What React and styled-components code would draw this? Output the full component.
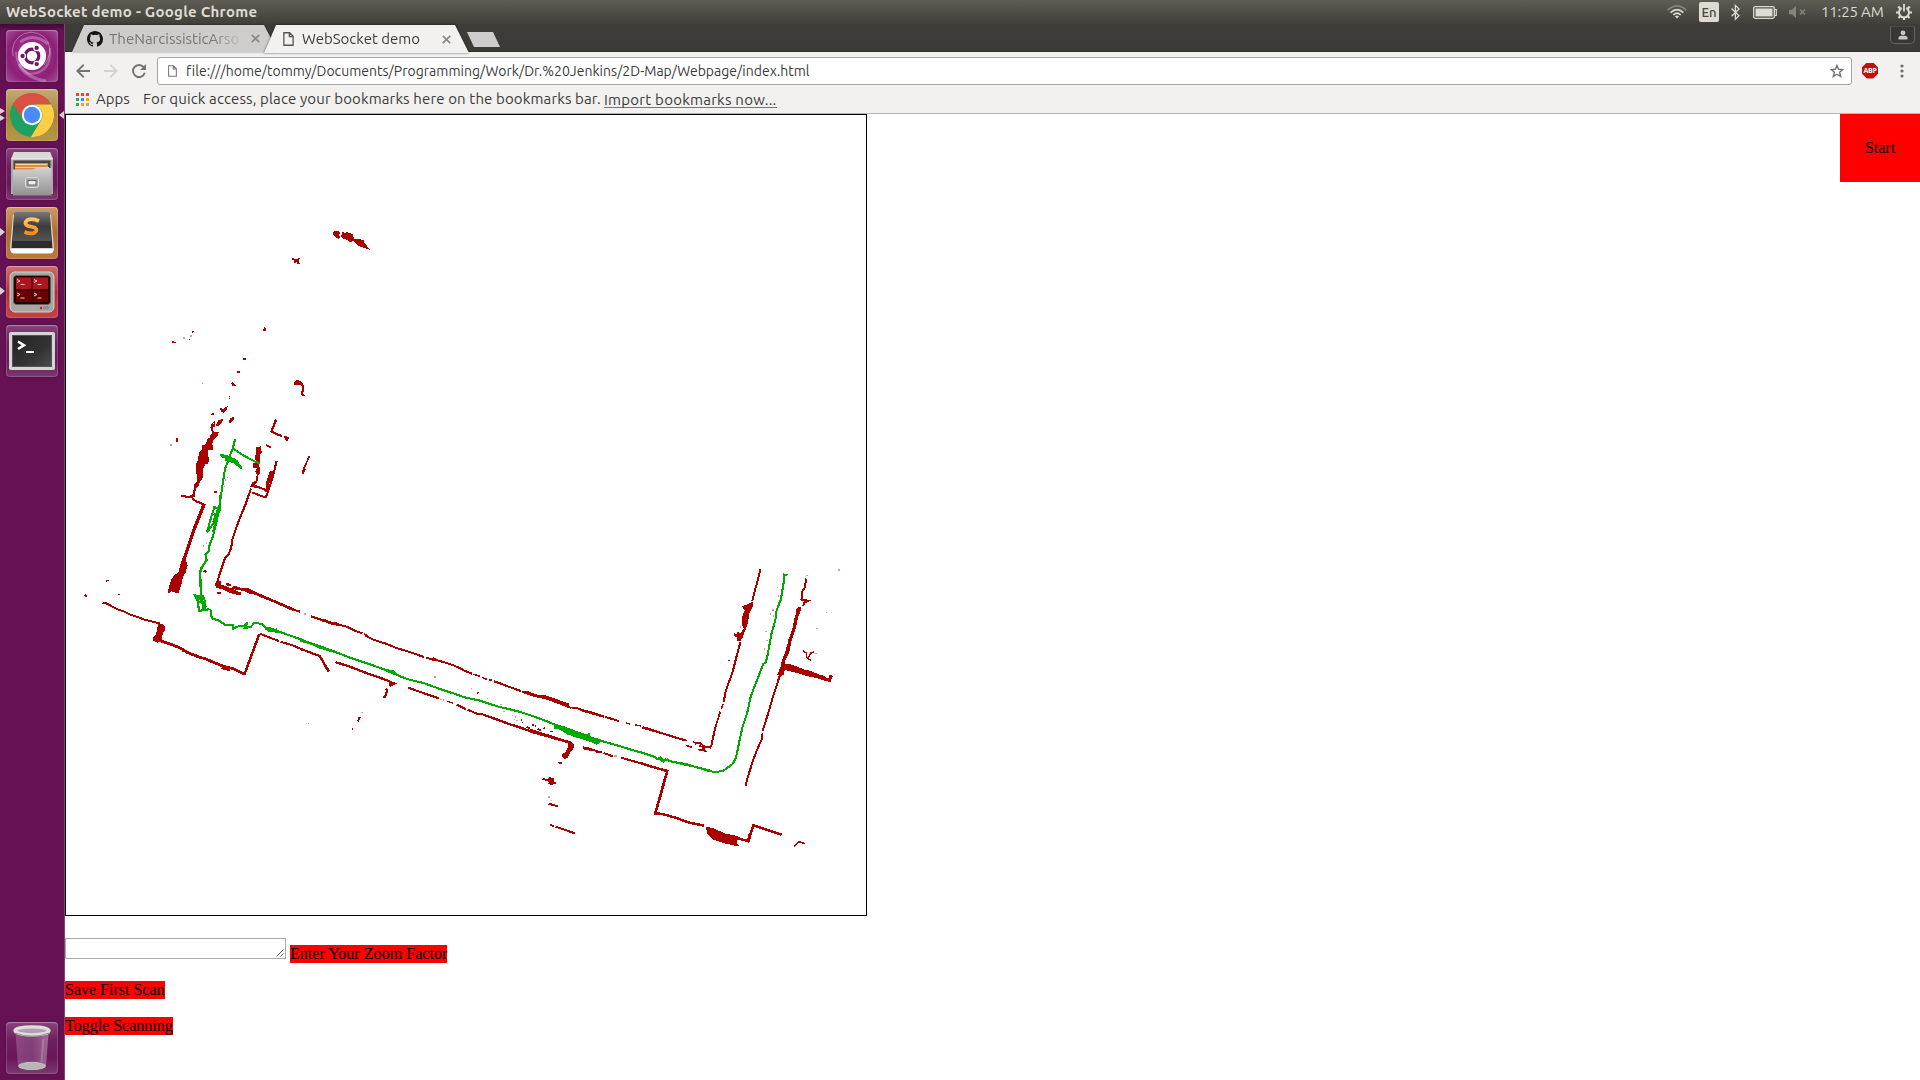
import React from "react";
import styled, { createGlobalStyle } from "styled-components";

const GlobalStyle = createGlobalStyle`
  * { box-sizing: border-box; }
  html, body { margin: 0; padding: 0; background: #fff; overflow: hidden; }
`;

const uiFont = `"Ubuntu", "Noto Sans", "Open Sans", sans-serif`;

const Desktop = styled.div`
  display: flex;
  flex-direction: column;
  width: 1920px;
  height: 1080px;
  overflow: hidden;
  font-family: ${uiFont};
`;

const Panel = styled.header`
  display: flex;
  align-items: center;
  justify-content: space-between;
  height: 24px;
  flex: none;
  padding: 0 8px 0 6px;
  background: linear-gradient(#5f5d53 0, #55534a 30%, #403f3a 100%);
  color: #dfdbd2;
`;

const Label = styled.span`
  font-size: ${(p) => p.$size || 15}px;
  font-weight: ${(p) => p.$weight || 400};
  letter-spacing: ${(p) => p.$track || 0}px;
  line-height: 20px;
  white-space: pre;
`;

const Indicators = styled.div`
  display: flex;
  align-items: center;
  height: 24px;
`;

const Slot = styled.span`
  display: flex;
  align-items: center;
  width: ${(p) => p.$w}px;
  margin-right: ${(p) => p.$gap || 0}px;
  overflow: visible;
`;

const LangBadge = styled.span`
  width: 20px;
  height: 20px;
  margin-right: 12px;
  border-radius: 2px;
  background: #dfdbd2;
  color: #45443e;
  font-size: 13px;
  line-height: 20px;
  font-weight: 500;
  text-align: center;
`;

const Workspace = styled.div`
  display: flex;
  flex: 1;
  min-height: 0;
`;

const Launcher = styled.nav`
  display: flex;
  flex-direction: column;
  gap: 7px;
  width: 65px;
  flex: none;
  padding: 6px 6px 6px 6px;
  border-right: 1px solid #7f4376;
  background: linear-gradient(#3d0c34 0, #651154 7px, #651154 100%);
`;

const Tile = styled.div`
  position: relative;
  display: flex;
  align-items: center;
  justify-content: center;
  width: 52px;
  height: 52px;
  margin-top: ${(p) => (p.$last ? "auto" : "0")};
  border-radius: 4px;
  background: ${(p) => p.$bg};
  box-shadow: inset 0 0 0 1px rgba(255, 255, 255, 0.15), inset 0 1px 1px rgba(255, 255, 255, 0.25), 0 0 2px rgba(0, 0, 0, 0.35);
`;

const Pip = styled.i`
  position: absolute;
  top: ${(p) => p.$top}px;
  left: ${(p) => (p.$right ? "53px" : "-6px")};
  width: 5px;
  height: ${(p) => p.$h || 8}px;
  background: #d9d2d8;
  clip-path: ${(p) => (p.$right ? "polygon(100% 0, 100% 100%, 0 50%)" : "polygon(0 0, 100% 50%, 0 100%)")};
`;

const Browser = styled.main`
  display: flex;
  flex-direction: column;
  flex: 1;
  min-width: 0;
`;

const TabStrip = styled.div`
  display: flex;
  align-items: flex-start;
  justify-content: space-between;
  height: 29px;
  flex: none;
  padding: 1px 5px 0 7px;
  background: linear-gradient(#3d3c37 0, #3c3b37 27px, #252420 28px, #f2f1f0 28px);
`;

const Tabs = styled.div`
  display: flex;
  align-items: flex-start;
`;

const TabEdge = styled.div`
  position: relative;
  margin-left: ${(p) => (p.$active ? "-14px" : "0")};
  filter: drop-shadow(0 0 1px ${(p) => (p.$active ? "rgba(0,0,0,.6)" : "rgba(0,0,0,.4)")});
`;

const Tab = styled.div`
  display: flex;
  align-items: center;
  width: ${(p) => (p.$active ? 205 : 206)}px;
  height: ${(p) => (p.$active ? 28 : 27)}px;
  padding: 0 18px 0 ${(p) => (p.$active ? 19 : 15)}px;
  background: ${(p) => (p.$active ? "#f2f1f0" : "#cfcdcb")};
  color: ${(p) => (p.$active ? "#3b3b3b" : "#777573")};
  clip-path: polygon(12px 0, calc(100% - 14px) 0, 100% 100%, 0 100%);
`;

const TabTitle = styled(Label)`
  flex: 1;
  min-width: 0;
  margin-left: ${(p) => p.$left}px;
  mask-image: ${(p) => (p.$fade ? "linear-gradient(90deg, #000 104px, transparent 134px)" : "none")};
`;

const NewTab = styled.div`
  width: 33px;
  height: 15px;
  margin: 7px 0 0 -2px;
  background: #cfcdcb;
  clip-path: polygon(0 0, 26px 0, 33px 100%, 7px 100%);
`;

const UserButton = styled.div`
  display: flex;
  align-items: center;
  justify-content: center;
  width: 25px;
  height: 18px;
  margin-top: 1px;
  border: 1px solid #66645e;
  border-top-color: #4a4944;
  border-radius: 1px 1px 5px 5px;
  background: #383733;
`;

const Toolbar = styled.div`
  display: flex;
  align-items: center;
  height: 33px;
  flex: none;
  padding: 3px 14px 1px 11px;
  background: #f2f1f0;
`;

const AddressBar = styled.div`
  display: flex;
  align-items: center;
  flex: 1;
  height: 28px;
  margin-right: 10px;
  padding: 0 7px 0 10px;
  border: 1px solid #a6a5a4;
  border-radius: 3px;
  background: #fff;
  color: #3b3b3b;
`;

const Address = styled(Label)`
  flex: 1;
  margin-left: 9px;
`;

const Blocker = styled.span`
  width: 16px;
  height: 16px;
  margin-right: 22px;
  background: #c70d0d;
  color: #fff;
  font: bold 7px/16px "Open Sans", sans-serif;
  text-align: center;
  letter-spacing: -0.3px;
  clip-path: polygon(30% 0, 70% 0, 100% 30%, 100% 70%, 70% 100%, 30% 100%, 0 70%, 0 30%);
`;

const Bookmarks = styled.div`
  display: flex;
  align-items: center;
  height: 28px;
  flex: none;
  padding: 0 11px 1px;
  border-bottom: 1px solid #b4b4b4;
  background: #f2f1f0;
  color: #3b3b3b;
`;

const AppsGrid = styled.span`
  display: grid;
  grid-template-columns: repeat(3, 3px);
  grid-auto-rows: 3px;
  gap: 2px;
  margin-right: 7px;
`;

const AppDot = styled.i`
  background: ${(p) => p.$c};
`;

const ImportLink = styled(Label)`
  height: 17px;
  line-height: 17px;
  border-bottom: 1px solid #777;
`;

const Page = styled.section`
  display: flex;
  align-items: flex-start;
  justify-content: space-between;
  flex: 1;
  background: #fff;
  color: #000;
  font: 16px/18px "Liberation Serif", "Times New Roman", serif;
`;

const Content = styled.div`
  display: flex;
  flex-direction: column;
  align-items: flex-start;
`;

const MapFrame = styled.div`
  width: 802px;
  height: 802px;
  margin-bottom: 22px;
  border: 1px solid #000;
`;

const ZoomRow = styled.div`
  display: flex;
  align-items: flex-end;
  height: 25px;
  margin-bottom: 18px;
`;

const ZoomInput = styled.div`
  display: flex;
  align-items: flex-end;
  justify-content: flex-end;
  align-self: flex-start;
  width: 221px;
  height: 21px;
  margin-right: 4px;
  padding: 1px;
  border: 1px solid #a9a9a9;
`;

const Action = styled.span`
  height: 18px;
  margin-bottom: ${(p) => p.$below || 0}px;
  background: #f00;
  letter-spacing: ${(p) => p.$track || 0}px;
  white-space: pre;
`;

const StartButton = styled.div`
  width: 80px;
  height: 68px;
  background: #f00;
  line-height: 68px;
  text-align: center;
`;

/* ---------- icons ---------- */

const Doc = ({ w, h, color }) => (
  <svg width={w} height={h} viewBox="0 0 10 13" fill="none" stroke={color} strokeWidth="1.2">
    <path d="M.7.7H6L9.3 4V12.3H.7Z M5.8.7V4.2H9.3" />
  </svg>
);

const Close = () => (
  <svg width="9" height="9" viewBox="0 0 9 9" stroke="#8b8987" strokeWidth="1.7">
    <path d="M.8.8 8.2 8.2M8.2.8.8 8.2" />
  </svg>
);

const GitHub = () => (
  <svg width="16" height="16" viewBox="0 0 16 16" fill="#161514">
    <path d="M8 0C3.58 0 0 3.58 0 8c0 3.54 2.29 6.53 5.47 7.59.4.07.55-.17.55-.38v-1.49c-2.01.37-2.53-.49-2.69-.94-.09-.23-.48-.94-.82-1.13-.28-.15-.68-.52-.01-.53.63-.01 1.08.58 1.23.82.72 1.21 1.87.87 2.33.66.07-.52.28-.87.51-1.07-1.78-.2-3.64-.89-3.64-3.95 0-.87.31-1.59.82-2.15-.08-.2-.36-1.02.08-2.12 0 0 .67-.21 2.2.82a7.6 7.6 0 0 1 4 0c1.53-1.04 2.2-.82 2.2-.82.44 1.1.16 1.92.08 2.12.51.56.82 1.27.82 2.15 0 3.07-1.87 3.75-3.65 3.95.29.25.54.73.54 1.48v2.2c0 .21.15.46.55.38A8 8 0 0 0 16 8c0-4.42-3.58-8-8-8Z" />
  </svg>
);

const Arrow = ({ color, flip }) => (
  <svg width="14" height="14" viewBox="0 0 14 14" fill="none" stroke={color} strokeWidth="1.9">
    <path d={flip ? "M0 7H12.5M6.3 .8 12.6 7 6.3 13.2" : "M14 7H1.5M7.7.8 1.4 7 7.7 13.2"} />
  </svg>
);

const Reload = () => (
  <svg width="14" height="14" viewBox="0 0 14 14">
    <path d="M11.7 3.2A6 6 0 1 0 12.8 8.7" fill="none" stroke="#757371" strokeWidth="1.9" />
    <path d="M14 0V6H8Z" fill="#757371" />
  </svg>
);

const Star = () => (
  <svg width="14" height="14" viewBox="0 0 14 14" fill="none" stroke="#757371" strokeWidth="1.4">
    <path d="M7 1.4 8.6 5.3 12.9 5.6 9.6 8.3 10.7 12.5 7 10.2 3.3 12.5 4.4 8.3 1.1 5.6 5.4 5.3Z" />
  </svg>
);

const Menu = () => (
  <svg width="4" height="14" viewBox="0 0 4 14" fill="#6f6d6b">
    <circle cx="2" cy="2" r="1.6" /><circle cx="2" cy="7" r="1.6" /><circle cx="2" cy="12" r="1.6" />
  </svg>
);

const Person = () => (
  <svg width="10" height="10" viewBox="0 0 10 10" fill="#c9c6c0">
    <circle cx="5" cy="2.8" r="2.4" /><path d="M.5 9.5V7.5Q1 6 3.2 5.8H6.8Q9 6 9.5 7.5V9.5Z" />
  </svg>
);

const Wifi = () => (
  <svg width="20" height="14" viewBox="0 0 20 14" fill="none" strokeWidth="1.7">
    <path d="M.8 5.2Q10-3.4 19.2 5.2" stroke="#88867e" />
    <path d="M3.6 7.6Q10 1.6 16.4 7.6M6.3 10Q10 6.4 13.7 10" stroke="#dfdbd2" />
    <path d="M8 11.4Q10 9.6 12 11.4L10 13.6Z" fill="#dfdbd2" />
  </svg>
);

const Bluetooth = () => (
  <svg width="9" height="17" viewBox="0 0 9 17" fill="none" stroke="#dfdbd2" strokeWidth="1.3">
    <path d="M.6 4.5 8 11.8 4.4 15.3V1.4L8 4.9.6 12.2" />
  </svg>
);

const Battery = () => (
  <svg width="24" height="13" viewBox="0 0 24 13">
    <rect x=".7" y=".7" width="20.6" height="11.6" rx="1.5" fill="none" stroke="#dfdbd2" strokeWidth="1.3" />
    <rect x="2.5" y="2.5" width="17" height="8" fill="#dfdbd2" />
    <path d="M22 3.5h1.3v6H22" fill="none" stroke="#dfdbd2" strokeWidth="1.2" />
  </svg>
);

const Muted = () => (
  <svg width="17" height="12" viewBox="0 0 17 12">
    <path d="M0 3.7H3L7 0V12L3 8.3H0Z" fill="#85837b" />
    <path d="M11 3.5 16 8.5M16 3.5 11 8.5" stroke="#85837b" strokeWidth="1.6" />
  </svg>
);

const Power = () => (
  <svg width="16" height="16" viewBox="0 0 16 16" fill="none" stroke="#dfdbd2">
    <path d="M5.6 4A5 5 0 1 0 10.4 4" strokeWidth="2" />
    <path d="M8 0V7.5" strokeWidth="1.8" />
    <path d="M2.2 2.6 4.2 4.4M13.8 2.6 11.8 4.4M0 8.5H2.5M13.5 8.5H16M2.4 14 4.4 12.2M13.6 14 11.6 12.2M8 13.5V16" strokeWidth="2.1" />
  </svg>
);

const Dash = () => (
  <svg width="52" height="52" viewBox="0 0 52 52">
    <g fill="none" stroke="#fff">
      <path d="M7 26A19 19 0 0 1 42 12Q47 24 38 35" strokeOpacity=".35" />
      <path d="M44 18Q46 42 25 44Q11 40 10 22" strokeOpacity=".25" strokeWidth="2" />
      <path d="M13 34Q20 48 40 51M14 12Q28 2 42 14" strokeOpacity=".28" strokeWidth="3" />
    </g>
    <circle cx="26" cy="26" r="14" fill="#fff" />
    <circle cx="26" cy="26" r="6.8" fill="none" stroke="#73155f" strokeWidth="3.2" />
    <g fill="#73155f" stroke="#fff" strokeWidth="1.3">
      <circle cx="16.6" cy="26" r="2.8" /><circle cx="30.7" cy="17.9" r="2.8" /><circle cx="30.7" cy="34.1" r="2.8" />
    </g>
  </svg>
);

const Chrome = () => (
  <svg width="44" height="44" viewBox="0 0 44 44">
    <circle cx="22" cy="22" r="22" fill="#1da261" />
    <path d="M3 11A22 22 0 0 1 41.2 11.5H22A10.5 10.5 0 0 0 12.9 27.2Z" fill="#dd4f43" />
    <path d="M41.2 11.5A22 22 0 0 1 21 44L31.1 27.2A10.5 10.5 0 0 0 22 11.5Z" fill="#ffce43" />
    <circle cx="22" cy="22" r="10.2" fill="#fff" />
    <circle cx="22" cy="22" r="8.2" fill="#4a8bf5" />
  </svg>
);

const Files = () => (
  <svg width="44" height="44" viewBox="0 0 44 44">
    <defs><linearGradient id="steel" x2="0" y2="1"><stop stopColor="#d0d0d0" /><stop offset="1" stopColor="#919191" /></linearGradient></defs>
    <path d="M4 0H40L43 8V42H1V8Z" fill="#a9a9a9" />
    <path d="M4 0H40L43 7H1Z" fill="#d9d9d9" />
    <path d="M1 7H43" stroke="#f2f2f2" />
    <rect x="3.5" y="8.5" width="37" height="10" fill="#4b4541" />
    <path d="M5 11H38V18H5Z" fill="#d98a45" /><path d="M6 12.5H37M5 15.5H39" stroke="#f3cfa2" strokeWidth="1.1" />
    <path d="M3 17.5H23L26 16H41.5V43.5H3Z" fill="url(#steel)" />
    <rect x="15.5" y="25.5" width="13" height="10" rx="2" fill="#aaa" stroke="#ddd" />
    <rect x="18" y="28.5" width="8" height="4.5" fill="#eee" stroke="#666" />
  </svg>
);

const Sublime = () => (
  <svg width="46" height="42" viewBox="0 0 46 42">
    <defs><linearGradient id="key" x2="0" y2="1"><stop stopColor="#777" /><stop offset=".5" stopColor="#3b3b3b" /><stop offset="1" stopColor="#555" /></linearGradient>
      <linearGradient id="ember" x2="0" y2="1"><stop stopColor="#ffc466" /><stop offset="1" stopColor="#ff8a12" /></linearGradient></defs>
    <path d="M4 3H42L45 36Q45 40 41 40H5Q1 40 1 36Z" fill="#d4d4d4" />
    <path d="M1 37H45Q44 41.5 41 41.5H5Q2 41.5 1 37" fill="#fff" />
    <path d="M5 5 2.5 36H43.5L41 5Z" fill="#2d2d2d" />
    <path d="M7 0H39Q41 0 41 3L42 29H4L5 3Q5 0 7 0Z" fill="url(#key)" />
    <path d="M30 9Q23 6 18.5 8Q14 11.5 19 14L25.5 15.5Q29.5 18 25.5 20.7Q21 22.5 15.5 20" fill="none" stroke="url(#ember)" strokeWidth="3.8" />
  </svg>
);

const Terminator = () => (
  <svg width="46" height="42" viewBox="0 0 46 42">
    <rect x="1" y="1" width="44" height="40" rx="5" fill="#a6a6a2" stroke="#d0d0cd" />
    <rect x="4.5" y="4.5" width="37" height="29" rx="3" fill="#290303" stroke="#666" strokeWidth=".7" />
    <path d="M7 6.5H22.5V18H7ZM23.5 6.5H39V18H23.5Z" fill="#b0141f" />
    <path d="M7 19.5H22.5V31H7ZM23.5 19.5H39V31H23.5Z" fill="#6a0000" />
    <path d="M8 8.5l3 1.5-3 1.5M11.5 13.5h4M25 8.5l3 1.5-3 1.5M28.5 13.5h4M8 22l3 1.5-3 1.5M11.5 27h4M25 22l3 1.5-3 1.5M28.5 27h4" fill="none" stroke="#ffc9c9" strokeWidth="1" />
    <circle cx="32" cy="37" r="1.2" fill="#f00" /><rect x="34.5" y="35.7" width="5" height="2.3" rx="1" fill="#999" stroke="#777" strokeWidth=".5" />
  </svg>
);

const Terminal = () => (
  <svg width="46" height="38" viewBox="0 0 46 38">
    <defs><linearGradient id="crt" x2="1" y2="1"><stop stopColor="#222" /><stop offset=".6" stopColor="#333" /><stop offset="1" stopColor="#4b4b4b" /></linearGradient></defs>
    <rect width="46" height="38" rx="2" fill="#d5d5d3" />
    <rect x="3.5" y="3.5" width="39" height="31" fill="url(#crt)" stroke="#555" />
    <path d="M9 9.5 15 13.2 9 17" fill="none" stroke="#fff" strokeWidth="2.5" /><path d="M17 20H25" stroke="#fff" strokeWidth="2" />
  </svg>
);

const Trash = () => (
  <svg width="38" height="46" viewBox="0 0 38 46">
    <defs><linearGradient id="glass"><stop stopColor="#b486b0" stopOpacity=".4" /><stop offset=".5" stopColor="#a070a0" stopOpacity=".4" /><stop offset="1" stopColor="#d4b1d2" stopOpacity=".5" /></linearGradient></defs>
    <path d="M2.5 8H35.5L33 41Q19 47 5 41Z" fill="url(#glass)" />
    <ellipse cx="19" cy="41" rx="13.5" ry="3.7" fill="#b3b8b2" stroke="#d7dad6" strokeWidth=".7" />
    <ellipse cx="19" cy="5.8" rx="17" ry="4" fill="#b79cb3" stroke="#dededb" strokeWidth="3.3" />
    <path d="M1.5 8Q19 14.5 36.5 8" fill="none" stroke="#9b9b98" strokeWidth="1.3" />
    <path d="M30.5 14 28.5 37" stroke="#fff" strokeOpacity=".2" strokeWidth="2" />
  </svg>
);

const Grip = () => (
  <svg width="8" height="8" viewBox="0 0 8 8" stroke="#555" strokeWidth="1">
    <path d="M.5 7.5 7.5.5M4.5 7.5 7.5 4.5" />
  </svg>
);

/* ---------- scan map: each sector is stored at three units per pixel ---------- */

const sectors = [
  {
    x: 160, y: 210,
    walls: [
      [5, "M396 146L406 149L409 153L417 162M410 154L403 157M410 151L419 145M403 152L416 154M37 396L47 398M99 362L97 370M412 515L423 520L430 530L430 543L425 549L433 558M53 683L50 697M318 704L332 712M160 610L156 615M209 557V562M289 716L304 712M372 680L383 683L380 692"],
      [6.5, "M348 628L340 650L334 665L352 673L366 679M424 520L430 530L430 543L425 549L430 556"],
      [3, "M88 390H90M314 352L318 357M209 565V568M163 632V650"],
    ],
    fills: "M520 66L528 62L542 66L537 74L541 81L536 86L528 83L520 76ZM545 68L550 66L556 71L560 66L578 73L583 87L590 88L594 86L610 90L614 101L622 109L630 120L610 113L594 108L587 101L578 92L570 98L562 91L551 86L544 82ZM309 360L315 353L320 357L317 364L310 363ZM248 444H257V450H249ZM231 485L237 481L242 486L239 490L232 489ZM213 519L219 517L227 524V529L218 528ZM181 593L190 597L203 588L199 602L190 608L183 603ZM170 641L175 631L188 627L187 638L178 647L169 649ZM205 637L211 627L222 620L221 629L211 638ZM402 517L410 509L420 512L428 520L431 531L421 526L403 524ZM154 649L160 641L164 645L158 658L160 665L174 666L175 676L166 686L160 685L159 698L153 702L160 708L158 720H130L134 711L140 709L139 696L146 695L148 684L158 681L158 667L153 657Z",
    dust: "M70 382h5v5h-5zM91 376h5v5h-5zM125 518h4v4h-4zM29 702h6v5h-6zM206 560h4v4h-4z",
  },
  {
    x: 150, y: 400,
    walls: [
      [6.3, "M93 287L108 290L121 290L127 286M126 291L130 299L141 305L154 310L163 314M380 182L373 212L366 239L352 281L347 292L328 286L307 277M305 257L330 263L352 272M303 266L287 312L268 358L259 382L247 419L244 442L235 465L226 472L214 508L202 545"],
      [10, "M163 311L149 346L133 386L108 461L98 488"],
      [5, "M81 115V126M478 169L461 207L458 221M349 135L361 142M228 552L243 554M249 560L270 564M200 579L210 578M187 44L193 42M163 512L168 515"],
      [6.5, "M378 60L364 95L379 102L397 108M405 111L412 116L408 121"],
      [6, "M197 551L208 560L235 566L260 576L271 581M245 564L288 570L312 577L433 629M199 548L209 552"],
    ],
    fills: "M211 27L220 28L232 18L231 29L221 39L213 34ZM202 66L217 58L213 71L205 79L197 76ZM235 66L242 54L254 50L249 61L240 68ZM184 73L191 66L188 84L191 96L207 96L201 109L194 113L190 121L186 134L190 141L186 150L176 147L174 160L177 178L174 192L166 192L160 204L160 224L156 238L150 243L146 259L139 263L135 280L134 291L124 293L130 276L132 255L141 243L142 229L137 214L138 192L145 180L146 158L155 148L157 135L166 134L174 114L182 117L180 105L187 99L181 84ZM98 486L112 489L108 516L99 526L96 548L86 579L72 577L64 573L54 579L58 556L65 536L75 523L90 515ZM317 142L333 139L335 157L330 165L331 185L325 191L331 208L330 219L325 227L322 246L314 253L323 258L316 263L300 260L307 247L318 242L320 223L315 215L321 205L310 204L309 189L319 187L314 171L318 162ZM349 245L353 232L359 215L371 212L367 230L358 251L352 275L346 277ZM458 209L462 204L468 207L461 220L457 222ZM194 549L210 552L229 560L245 565L261 576L271 576L271 585L253 582L242 574L228 571L211 563L197 561ZM275 563L300 566L316 575L314 584L291 576L278 571ZM192 272H200V279H192Z",
    dust: "M60 132h5v4h-5zM224 236h4v7h-4zM222 258h4v4h-4zM231 230h4v5h-4zM238 594h5v4h-5zM158 435h5v5h-5zM168 428h4v4h-4z",
    trail: "M255 118L249 143L239 168L233 186L225 207L217 258L212 294L202 354L189 408L178 438L176 453L166 463L170 480L155 504L150 516L149 540L154 577L152 590M250 146L275 163L302 178L329 191M211 164L233 169L256 180L275 205L241 178L214 168M224 180L250 186L264 195M232 172L262 183M247 150L233 181M209 285L211 315L210 330L190 370L171 397L183 353L193 322L205 324L189 368L205 330M199 359L189 397M192 341L202 347",
  },
  {
    x: 70, y: 560,
    walls: [
      [6, "M98 128L112 131L134 144L148 150L164 155L181 164L200 170L224 179L249 185L270 191M463 0L450 39L442 66M541 94L580 112L620 128L664 148L690 155M723 169L756 180L786 192L810 195M569 221L597 232L627 243M632 245L670 257L710 274L748 288M760 179L778 186M796 307L810 311M401 32L409 36M440 99L452 98M443 66L454 68M467 73L482 75M487 82L503 87"],
      [8.5, "M265 241L300 252L331 264L351 277L382 289L410 298L435 309L461 319L490 326L523 343M336 271L350 274M455 323L480 329"],
      [7.5, "M749 289L758 302L766 318L776 333M568 222L523 344"],
      [4, "M108 63L117 62M144 103H149M43 105L52 110M46 111V103"],
    ],
    fills: "M264 190L278 191L286 201L285 213L279 219L274 241L263 249L249 242V232L258 225L262 205ZM335 0L348 0L353 16L347 27L343 43L329 75L321 100L307 93L294 101L296 85L308 55L325 38ZM436 69L445 70L455 74L467 78L489 87L504 94L514 98V105L494 103L478 98L465 91L450 86L437 83ZM512 84L532 85L551 93L557 102L540 102L526 95L512 92Z",
    dust: "M702 160h6v4h-6zM477 113h5v4h-5z",
    trail: "M411 0L394 23L390 44L394 80L394 102M373 102L378 112L385 126L386 153L416 148M376 110L399 107L405 125L407 142M376 105L390 115L396 129L408 149M383 108L400 126L398 146M379 119L394 110L397 125L385 126M421 146L424 169L429 177L444 180L465 194L488 195L489 207L501 200L522 197L533 188L525 203L541 202L554 188L570 191L577 193L586 202L604 206L650 223L698 240L750 263L810 281M585 207L610 214L636 216M594 214L621 208",
  },
  {
    x: 300, y: 620,
    walls: [
      [6, "M61 0L80 5L98 9L115 13L142 21L164 32L187 40M199 48L220 59L258 71L289 84L319 93L343 101L372 111M378 114L400 118L434 127L463 137L485 147L493 152L516 161M582 184L603 191L628 201L663 213M666 215L700 227L735 234L773 248L814 264M817 264L830 265M841 270L900 287M0 87L28 96L57 107M325 203L372 220L417 235M470 254L498 268M503 269L530 281L550 283M174 304L179 291M728 476L747 482M746 551L774 559M751 615L761 618M767 620L794 629L824 640M258 206L262 212L257 222L256 232L250 230M853 383L870 386L900 397"],
      [4.5, "M520 163L541 169M546 172L561 178M566 180H576M442 244L460 250M532 219L538 217M155 325L160 328"],
      [7, "M108 127L150 140L196 158L237 172L276 187M550 284L592 299L627 312L659 322L700 337L740 348L775 358L814 368M59 108L72 130L87 154"],
      [9, "M676 216L714 229L738 231L773 243L805 256"],
      [5, "M680 321L690 325M713 327L722 331M732 323L734 327M742 343L748 345M751 335H758M697 315H702M706 318H709M666 308H669M664 300H667"],
    ],
    fills: "M193 40L201 43L202 52L194 49ZM100 10L110 6L118 12L110 17ZM390 115L402 112L410 118L400 124ZM267 192L273 184L292 190L283 195L278 198L270 201ZM803 367L815 365L823 374L820 388L812 395L804 413L794 418L785 410L786 402L795 398L803 384ZM775 426H785V432H776ZM742 475L748 471L761 475L763 485L770 490L762 492L754 495L743 492L748 486L738 481L748 480ZM487 260L500 264L497 270ZM754 350L767 353L764 360ZM848 379L865 381L860 389L850 388ZM802 250L810 260L803 263Z",
    dust: "M401 168h6v6h-6zM512 204h4v4h-4zM561 233h4v4h-4zM600 252h5v4h-5zM609 272h5v4h-5zM421 237h5v4h-5zM428 238h5v4h-5zM183 275h5v4h-5zM744 529h5v5h-5zM753 540h4v4h-4zM24 309h4v4h-4zM636 285h4v4h-4zM645 289h4v4h-4zM649 300h4v4h-4zM642 296h4v4h-4z",
    trail: "M0 62L40 72L105 95L152 114L190 126L258 150L298 168L328 179L371 189L425 209L460 220L490 231L540 242L592 259L658 275L700 289L741 304L767 315L797 324L850 344L900 362",
    trailFill: "M252 148L278 149L290 161L282 164L267 158L258 156ZM761 319L777 320L790 317L820 331L851 342L864 349V341L870 340L868 353L900 357V369L888 375L887 364L862 358L832 352L803 344L777 328L762 326Z",
  },
  {
    x: 640, y: 550,
    walls: [
      [6, "M362 56L355 84L346 117L337 153M301 277L290 318L279 362L262 410L255 431L252 455M241 485L237 497M228 525L220 559L213 592M8 533L38 542L77 553L103 562L138 571M197 589L213 593M186 587L195 602L182 599M499 86L494 113L487 124L484 151M484 149L505 152L492 158L490 168M420 375L399 440L386 485L368 543M364 570L350 602L339 631L321 689L317 708"],
      [4.5, "M249 463L244 478M237 497L228 525M367 548L366 570M160 576L170 579M137 586L155 591M176 588L190 590M489 303L500 309L500 322L512 331M504 324L513 309L522 306M462 889L477 875L496 881M263 332H270"],
      [7.5, "M0 638L28 648L82 663L71 700L46 790M46 789L75 794L110 804L144 817L192 827M284 862L325 874L340 826L425 854M329 852L325 872M474 174L468 211L459 244L444 290L432 332"],
      [10, "M480 172L469 203L463 233L450 271L443 305L431 330L427 351L416 376M566 395L574 376"],
    ],
    fills: "M306 169L324 162L340 154L337 174L327 192L325 214L317 238L307 264L302 273L290 272L293 264L280 256L282 249L291 253L292 245L301 251L311 235L305 224L307 198L314 181ZM355 57L364 55L364 70L359 68ZM426 339L450 343L470 349L493 359L511 362L535 373L550 377L568 389L571 397L551 391L525 383L500 378L472 369L451 364L434 360L430 376L417 378L422 356ZM198 830L224 836L253 850L292 858L298 865L290 872V881L298 889L280 886L253 880L219 869L202 852ZM42 782L54 785L58 796L43 795ZM173 597L187 597L196 604L180 604Z",
    dust: "M594 57h6v5h-6zM558 186h4v4h-4zM528 233h6v4h-6zM411 110h4v5h-4zM414 136h4v4h-4zM397 177h5v5h-5zM389 190h5v5h-5zM398 196h4v4h-4zM376 242h4v4h-4zM379 270h4v4h-4zM372 295h4v4h-4zM499 75h4v4h-4zM526 308h5v4h-5zM299 228h5v5h-5z",
    trail: "M442 76L433 74L431 98L423 147L410 180L406 211L394 253L382 319L378 336L370 342L348 398L332 440L322 487L307 533L299 570L290 614L286 628L277 643L264 652L252 661L227 667L201 661L164 650L127 642L85 632L77 628L70 635L59 626L51 628L43 620L0 606",
  },
  {
    x: 530, y: 690,
    walls: [
      [6, "M136 53L156 60L190 69L222 80M226 81L267 93M338 111L371 121L401 131L435 142L470 152M163 175L190 182M195 184L217 187M221 189L248 199M274 203L308 213L345 224L412 244M494 161L510 159L525 171L540 172M86 219H94"],
      [4, "M288 99L300 102M314 104L332 108M467 166L487 173"],
      [7.5, "M412 244L406 263L388 330M35 20L70 29L115 44M0 120L120 158"],
    ],
    fills: "M505 176L525 184V166L518 166L516 179ZM159 171L173 171L175 178L164 180Z",
    dust: "M253 196h7v5h-7z",
    trail: "M195 146L218 154L268 168L303 179L350 192L371 199L380 207L392 202L400 212L412 208L417 213L470 223L500 232L540 242",
    trailFill: "M77 108L99 111L132 123L171 133L180 128L176 139L211 152L206 161L196 162L168 151L131 140L102 128Z",
  },
];

function ScanMap() {
  return (
    <svg width="800" height="800" viewBox="66 115 800 800" shapeRendering="crispEdges" display="block">
      {sectors.map((s) => (
        <g key={`${s.x}-${s.y}`} transform={`translate(${s.x} ${s.y}) scale(.33333)`} fill="none">
          <path d={s.dust} fill="#d99" />
          {s.walls.map(([w, d], i) => <path key={i} d={d} stroke="#a00" strokeWidth={w} />)}
          <path d={s.fills} fill="#a00" />
          <path d={s.trail} stroke="#00aa00" strokeWidth="6.2" />
          {s.trailFill && <path d={s.trailFill} fill="#00aa00" />}
        </g>
      ))}
    </svg>
  );
}

const appColors = ["#ea4335", "#ea4335", "#ea4335", "#34a853", "#4285f4", "#f4a900", "#34a853", "#f4a900", "#f4a900"];
const plain = "linear-gradient(#874579, #6d1f5e 35%, #6a175a 70%, #7c3a70)";

export default function App() {
  return (
    <Desktop>
      <GlobalStyle />
      <Panel>
        <Label $weight={700} $size={15} $track={0.26}>WebSocket demo - Google Chrome</Label>
        <Indicators>
          <Slot $w={20} $gap={12}><Wifi /></Slot>
          <LangBadge>En</LangBadge>
          <Slot $w={9} $gap={13}><Bluetooth /></Slot>
          <Slot $w={24} $gap={12}><Battery /></Slot>
          <Slot $w={17} $gap={15}><Muted /></Slot>
          <Slot $w={62} $gap={13}><Label $size={15} $track={-0.15}>11:25 AM</Label></Slot>
          <Slot $w={16}><Power /></Slot>
        </Indicators>
      </Panel>
      <Workspace>
        <Launcher>
          <Tile $bg="radial-gradient(circle, #b23f9c, #8c1f77 65%, #a6529a)"><Dash /></Tile>
          <Tile $bg="linear-gradient(#c4ac76, #a98536 50%, #b69748)">
            <Pip $top={19} $h={6} /><Pip $top={26} $h={6} /><Chrome /><Pip $right $top={22} />
          </Tile>
          <Tile $bg={plain}><Files /></Tile>
          <Tile $bg="linear-gradient(#cc9c68, #ae6d2f 50%, #ba7a3c)"><Pip $top={21} /><Sublime /></Tile>
          <Tile $bg="linear-gradient(#cd6f6f, #b52e36 50%, #c04348)"><Pip $top={21} /><Terminator /></Tile>
          <Tile $bg={plain}><Terminal /></Tile>
          <Tile $bg={plain} $last><Trash /></Tile>
        </Launcher>
        <Browser>
          <TabStrip>
            <Tabs>
              <TabEdge>
                <Tab>
                  <GitHub />
                  <TabTitle $fade $left={6}>TheNarcissisticArso</TabTitle>
                  <Close />
                </Tab>
              </TabEdge>
              <TabEdge $active>
                <Tab $active>
                  <Doc w={11} h={14} color="#555" />
                  <TabTitle $left={8}>WebSocket demo</TabTitle>
                  <Close />
                </Tab>
              </TabEdge>
              <NewTab />
            </Tabs>
            <UserButton><Person /></UserButton>
          </TabStrip>
          <Toolbar>
            <Slot $w={14} $gap={14}><Arrow color="#757371" /></Slot>
            <Slot $w={14} $gap={14}><Arrow flip color="#d5d3d1" /></Slot>
            <Slot $w={14} $gap={11}><Reload /></Slot>
            <AddressBar>
              <Doc w={9} h={12} color="#777" />
              <Address $size={14} $track={0.018}>file:///home/tommy/Documents/Programming/Work/Dr.%20Jenkins/2D-Map/Webpage/index.html</Address>
              <Star />
            </AddressBar>
            <Blocker>ABP</Blocker>
            <Slot $w={6}><Menu /></Slot>
          </Toolbar>
          <Bookmarks>
            <AppsGrid>{appColors.map((c, i) => <AppDot key={i} $c={c} />)}</AppsGrid>
            <Slot $w={34} $gap={13}><Label>Apps</Label></Slot>
            <Slot $w={461}><Label $track={0.13}>For quick access, place your bookmarks here on the bookmarks bar.</Label></Slot>
            <ImportLink $track={0.25}>Import bookmarks now...</ImportLink>
          </Bookmarks>
          <Page>
            <Content>
              <MapFrame><ScanMap /></MapFrame>
              <ZoomRow>
                <ZoomInput><Grip /></ZoomInput>
                <Action $track={0.04}>Enter Your Zoom Factor</Action>
              </ZoomRow>
              <Action $below={18}>Save First Scan</Action>
              <Action>Toggle Scanning</Action>
            </Content>
            <StartButton>Start</StartButton>
          </Page>
        </Browser>
      </Workspace>
    </Desktop>
  );
}
